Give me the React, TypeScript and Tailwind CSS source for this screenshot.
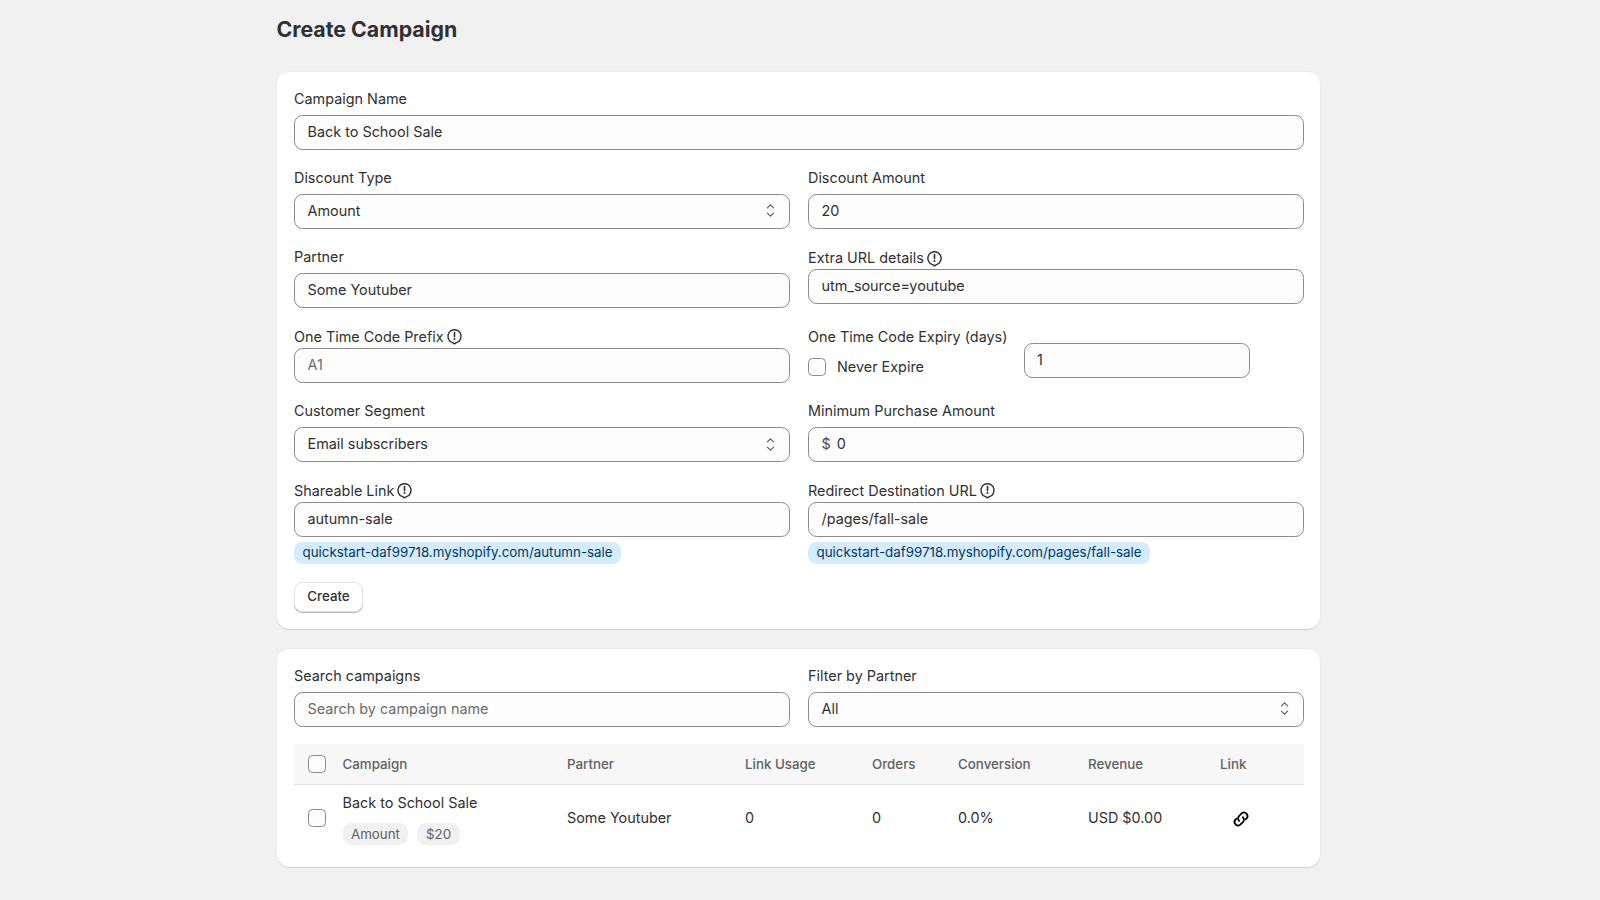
function HelpIcon() {
  return (
    <svg width="17" height="17" viewBox="0 0 17 17" fill="none" className="shrink-0 ml-[2px]">
      <path d="M8.5 15.9l-1.9-1.3a6.6 6.6 0 1 1 3.8 0z" stroke="#303030" strokeWidth="1.4" strokeLinejoin="round" />
      <path d="M8.5 4.6v4.2" stroke="#303030" strokeWidth="1.6" strokeLinecap="round" />
      <circle cx="8.5" cy="11.1" r="1" fill="#303030" />
    </svg>
  )
}

function Chevrons() {
  return (
    <svg width="17" height="17" viewBox="0 0 17 17" fill="none" className="shrink-0">
      <path d="M5.4 5.9l3.1-3.1 3.1 3.1M5.4 11.1l3.1 3.1 3.1-3.1" stroke="#5a5a5a" strokeWidth="1.1" strokeLinecap="round" strokeLinejoin="round" />
    </svg>
  )
}

function LinkIcon() {
  return (
    <svg width="20" height="20" viewBox="0 0 18 18" fill="none" className="ml-[10.5px]">
      <path d="M7.3 10.7a3.2 3.2 0 0 1 0-4.5l2.3-2.3a3.2 3.2 0 0 1 4.5 4.5l-1 1" stroke="#000" strokeWidth="1.6" strokeLinecap="round" strokeLinejoin="round" />
      <path d="M10.7 7.3a3.2 3.2 0 0 1 0 4.5l-2.3 2.3a3.2 3.2 0 0 1-4.5-4.5l1-1" stroke="#000" strokeWidth="1.6" strokeLinecap="round" strokeLinejoin="round" />
    </svg>
  )
}

function Label({ children, help }: { children: string; help?: boolean }) {
  if (help) {
    return (
      <div className="flex items-center h-[22px]">
        <span>{children}</span>
        <HelpIcon />
      </div>
    )
  }
  return <div className="h-[22px] leading-[22px] mb-[5px]">{children}</div>
}

function Box({ children, muted, className }: { children?: React.ReactNode; muted?: boolean; className?: string }) {
  return (
    <div className={`flex items-center h-[35px] pb-[1px] px-[12.5px] rounded-[8.5px] border border-[#8a8a8a] bg-[#fdfdfd] ${muted ? 'text-[#6b6b6b]' : ''} ${className ?? ''}`}>
      {children}
    </div>
  )
}

function SelectBox({ value }: { value: string }) {
  return (
    <Box className="justify-between pr-[10px]">
      <span>{value}</span>
      <Chevrons />
    </Box>
  )
}

function Checkbox() {
  return <span className="block w-[18px] h-[18px] rounded-[4.5px] border border-[#8a8a8a] bg-[#fdfdfd] shrink-0" />
}

function UrlBadge({ children }: { children: string }) {
  return (
    <div className="mt-[4.5px]">
      <span className="inline-block h-[22px] leading-[21px] px-[8.5px] rounded-[8.5px] bg-[#d5ebff] text-[#003a5a] text-[13.33px]">
        {children}
      </span>
    </div>
  )
}

function Tag({ children }: { children: string }) {
  return <span className="h-[22px] leading-[22px] px-[8.5px] rounded-[8.5px] bg-[#f1f1f1] text-[#616161] text-[13.33px]">{children}</span>
}

const card = 'bg-white rounded-[12.5px] border-t border-[#ebebeb] shadow-[0_1px_1px_rgba(0,0,0,0.14)] pl-[17.5px] pr-[16px]'

export default function App() {
  return (
    <div className="min-h-[900px] bg-[#f1f1f1] text-[#303030] text-[14.4px] font-['Inter',sans-serif]">
      <div className="w-[1043.5px] ml-[276.5px]">
        <h1 className="h-[71px] pt-[14px] text-[21.33px] leading-[30px] font-bold">Create Campaign</h1>

        <div className={`${card} pt-[16px] pb-[17px]`}>
          <Label>Campaign Name</Label>
          <Box>Back to School Sale</Box>

          <div className="grid grid-cols-2 gap-x-[18px] gap-y-[17.6px] mt-[16.5px]">
            <div>
              <Label>Discount Type</Label>
              <SelectBox value="Amount" />
            </div>
            <div>
              <Label>Discount Amount</Label>
              <Box>20</Box>
            </div>

            <div>
              <Label>Partner</Label>
              <Box>Some Youtuber</Box>
            </div>
            <div className="pt-[1px]">
              <Label help>Extra URL details</Label>
              <Box>utm_source=youtube</Box>
            </div>

            <div>
              <Label help>One Time Code Prefix</Label>
              <Box muted>A1</Box>
            </div>
            <div>
              <Label>One Time Code Expiry (days)</Label>
              <div className="flex items-start -mt-[10px]">
                <label className="flex items-center gap-[11px] w-[215.5px] mt-[12.5px] h-[24px]">
                  <Checkbox />
                  <span>Never Expire</span>
                </label>
                <Box className="w-[226px] pb-0">1</Box>
              </div>
            </div>

            <div>
              <Label>Customer Segment</Label>
              <SelectBox value="Email subscribers" />
            </div>
            <div>
              <Label>Minimum Purchase Amount</Label>
              <Box>
                <span className="text-[#4a4a4a] mr-[6px]">$</span>0
              </Box>
            </div>

            <div>
              <Label help>Shareable Link</Label>
              <Box>autumn-sale</Box>
              <UrlBadge>quickstart-daf99718.myshopify.com/autumn-sale</UrlBadge>
            </div>
            <div>
              <Label help>Redirect Destination URL</Label>
              <Box>/pages/fall-sale</Box>
              <UrlBadge>quickstart-daf99718.myshopify.com/pages/fall-sale</UrlBadge>
            </div>
          </div>

          <button className="mt-[17.5px] h-[30px] w-[69px] rounded-[8.5px] bg-white border border-[#e3e3e3] shadow-[0_1px_0_#b5b5b5] text-[13.33px] font-medium text-[#303030]">
            Create
          </button>
        </div>

        <div className={`${card} mt-[19.5px] pt-[15.5px]`}>
          <div className="grid grid-cols-2 gap-x-[18px]">
            <div>
              <Label>Search campaigns</Label>
              <Box muted>Search by campaign name</Box>
            </div>
            <div>
              <Label>Filter by Partner</Label>
              <SelectBox value="All" />
            </div>
          </div>

          <table className="w-full mt-[17px] table-fixed">
            <thead>
              <tr className="h-[41px] bg-[#f7f7f7] border-b border-[#e3e3e3] text-[13.33px] text-[#616161] text-left">
                <th className="w-[48.5px] pl-[14px] font-medium"><Checkbox /></th>
                <th className="w-[224.5px] pt-[2px] font-medium">Campaign</th>
                <th className="w-[178px] pt-[2px] font-medium">Partner</th>
                <th className="w-[127px] pt-[2px] font-medium">Link Usage</th>
                <th className="w-[86px] pt-[2px] font-medium">Orders</th>
                <th className="w-[130px] pt-[2px] font-medium">Conversion</th>
                <th className="w-[132px] pt-[2px] font-medium">Revenue</th>
                <th className="pt-[2px] font-medium">Link</th>
              </tr>
            </thead>
            <tbody>
              <tr className="h-[67px]">
                <td className="pl-[14px] pb-[1px]"><Checkbox /></td>
                <td>
                  <div className="h-[22px] leading-[22px]">Back to School Sale</div>
                  <div className="flex gap-[9px] mt-[9px]">
                    <Tag>Amount</Tag>
                    <Tag>$20</Tag>
                  </div>
                </td>
                <td className="pb-[1px]">Some Youtuber</td>
                <td className="pb-[1px]">0</td>
                <td className="pb-[1px]">0</td>
                <td className="pb-[1px]">0.0%</td>
                <td className="pb-[1px]">USD $0.00</td>
                <td>
                  <LinkIcon />
                </td>
              </tr>
            </tbody>
          </table>
          <div className="h-[15px]" />
        </div>
      </div>
    </div>
  )
}
